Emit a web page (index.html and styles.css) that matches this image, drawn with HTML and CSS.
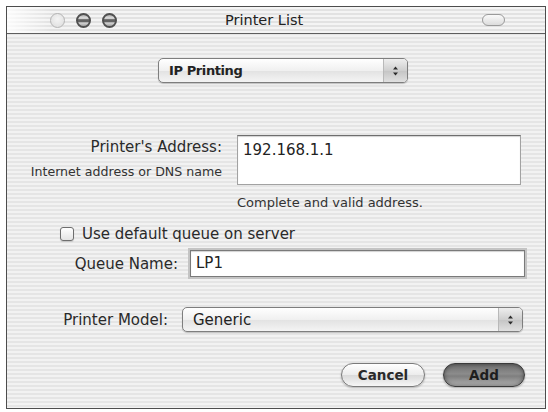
FILE: index.html
```html
<!DOCTYPE html>
<html lang="en">
<head>
  <meta charset="UTF-8" />
  <meta name="viewport" content="width=device-width,initial-scale=1.0" />
  <title>Printer List</title>
  <link rel="stylesheet" href="styles.css">
</head>

<body>
  <div class="window">
    <!-- title bar -->
    <header class="titlebar">
      <div class="lights">
        <span class="light off"></span>
        <span class="light"></span>
        <span class="light"></span>
      </div>
      <span class="title">Printer List</span>
      <span class="pill"></span>
    </header>

    <div class="content">
      <div class="popup protocol">
        <span class="popup-text">IP Printing</span>
        <span class="stepper">
          <svg width="7" height="12" viewBox="0 0 7 12"><path d="M3.5 1.5 L6 4.5 H1 Z M3.5 10.5 L6 7.5 H1 Z" fill="#2b2b2b"/></svg>
        </span>
      </div>

      <div class="row address">
        <div class="labels">
          <span class="label">Printer's Address:</span>
          <span class="sub">Internet address or DNS name</span>
        </div>
        <div class="field tall">192.168.1.1</div>
      </div>
      <p class="hint">Complete and valid address.</p>

      <label class="check"><span class="box"></span>Use default queue on server</label>

      <div class="row queue">
        <span class="label">Queue Name:</span>
        <div class="field focus">LP1</div>
      </div>

      <div class="row model">
        <span class="label">Printer Model:</span>
        <div class="popup wide">
          <span class="popup-text plain">Generic</span>
          <span class="stepper">
            <svg width="7" height="12" viewBox="0 0 7 12"><path d="M3.5 1.5 L6 4.5 H1 Z M3.5 10.5 L6 7.5 H1 Z" fill="#2b2b2b"/></svg>
          </span>
        </div>
      </div>

      <div class="buttons">
        <button class="btn">Cancel</button>
        <button class="btn default">Add</button>
      </div>
    </div>
  </div>
</body>
</html>
```

FILE: styles.css
```css
*{box-sizing:border-box;}
body{
  margin:0;
  background:#fff;
  font-family:"DejaVu Sans","Liberation Sans",sans-serif;
  color:#262626;
}

/* window frame with aqua pinstripes */
.window{
  margin:6px 0 0 6px;
  width:540px;
  height:403px;
  border:1px solid #4d4d4d;
  background:repeating-linear-gradient(#f2f2f2 0 2px,#e5e5e5 2px 4px);
}

/* title bar */
.titlebar{
  height:27px;
  display:flex;
  align-items:center;
  border-bottom:1px solid #5e5e5e;
  background:
    linear-gradient(90deg,rgba(255,255,255,.85) 0,rgba(255,255,255,0) 45px),
    repeating-linear-gradient(#f4f4f4 0 2px,#e2e2e2 2px 4px);
}
.lights{display:flex;gap:11px;margin-left:43px;}
.light{
  width:15px;height:15px;border-radius:50%;
  border:2px solid #505050;
  background:linear-gradient(#b0b0b0 0,#e2e2e2 30%,#6a6a6a 42%,#5a5a5a 58%,#d4d4d4 72%,#a4a4a4 100%);
}
.light.off{
  border:1.5px solid #b4b4b4;
  background:radial-gradient(circle at 50% 40%,#f4f4f4 0,#dcdcdc 100%);
}
.title{margin-left:108px;font-size:14.5px;color:#222;}
.pill{
  margin-left:auto;margin-right:40px;
  width:23px;height:12px;border-radius:6px;
  border:1.5px solid #9a9a9a;
  background:linear-gradient(#fafafa,#dcdcdc);
}

.content{padding-top:24px;}

/* popup buttons */
.popup{
  display:flex;
  align-items:stretch;
  height:25px;
  border:1px solid #7e7e7e;
  border-radius:5px;
  background:linear-gradient(#ffffff,#f0f0f0 50%,#e2e2e2 51%,#f4f4f4);
  box-shadow:0 1px 1px rgba(0,0,0,.2);
  overflow:hidden;
}
.popup-text{
  flex:1;
  display:flex;align-items:center;
  padding-left:10px;
  font-size:13px;font-weight:bold;letter-spacing:-.4px;
  color:#222;
}
.popup-text.plain{font-size:15px;font-weight:normal;letter-spacing:0;}
.stepper{
  width:24px;
  display:flex;align-items:center;justify-content:center;
  border-left:1px solid #b9b9b9;
  background:linear-gradient(#eeeeee,#cfcfcf 50%,#c4c4c4 51%,#e0e0e0);
}
.protocol{margin-left:151px;width:250px;}

/* rows */
.row{display:flex;}
.label{font-size:15px;line-height:18px;color:#2a2a2a;}

.address{margin-top:52px;}
.address .labels{
  width:215px;
  display:flex;flex-direction:column;align-items:flex-end;
  padding-top:3px;
}
.sub{margin-top:8px;font-size:12.6px;line-height:15px;color:#333;}

.field{
  background:#fff;
  border:1px solid #a2a2a2;
  border-top-color:#6e6e6e;
  box-shadow:inset 0 1px 1px rgba(0,0,0,.18);
  font-size:15px;
  color:#222;
  padding:5px 5px 0;
}
.field.tall{margin-left:15px;width:284px;height:50px;}

.hint{margin:10px 0 0 230px;font-size:13px;line-height:16px;color:#333;}

.check{
  display:flex;align-items:center;gap:8px;
  margin:14px 0 0 53px;
  height:18px;
  font-size:15px;color:#2a2a2a;
}
.box{
  width:14px;height:14px;border-radius:3px;
  border:1px solid #6e6e6e;
  background:linear-gradient(#ffffff,#e4e4e4);
  box-shadow:0 1px 1px rgba(0,0,0,.15);
}

.queue{margin-top:7px;align-items:center;}
.queue .label{width:171px;text-align:right;}
.field.focus{
  margin-left:12px;width:335px;height:27px;
  padding-top:3px;
  border-color:#7a7a7a;
  box-shadow:0 0 0 2px #c4c4c4,inset 0 1px 1px rgba(0,0,0,.18);
}

.model{margin-top:30px;align-items:center;}
.model .label{width:161px;text-align:right;}
.popup.wide{margin-left:14px;width:341px;}

/* push buttons */
.buttons{
  display:flex;justify-content:flex-end;gap:18px;
  margin:31px 20px 0 0;
}
.btn{
  height:24px;
  border-radius:12px;
  border:1px solid #7a7a7a;
  background:linear-gradient(#ffffff,#ececec 50%,#dadada 51%,#f6f6f6);
  box-shadow:0 1px 2px rgba(0,0,0,.25);
  font-family:inherit;
  font-size:13.5px;font-weight:bold;
  color:#2a2a2a;
  width:84px;
  padding:0;
}
.btn.default{
  width:82px;
  border-color:#3a3a3a;
  background:linear-gradient(#6e6e6e,#8c8c8c 45%,#7e7e7e 55%,#b4b4b4);
  box-shadow:0 1px 2px rgba(0,0,0,.3),inset 0 0 4px rgba(0,0,0,.45);
  color:#1e1e1e;
}
```
